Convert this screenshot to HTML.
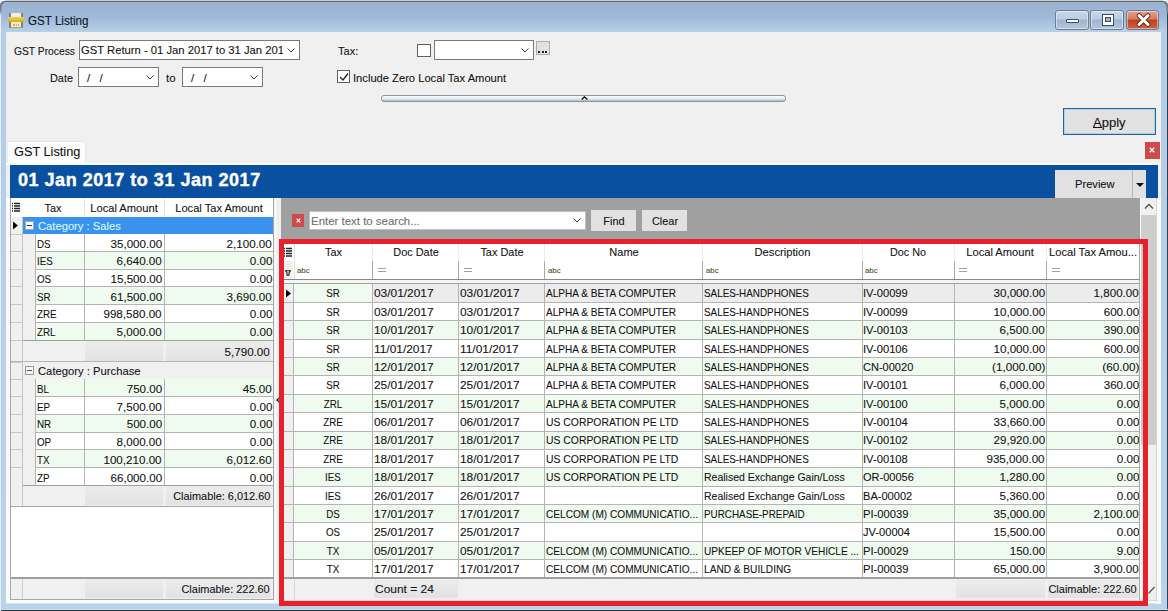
<!DOCTYPE html><html><head><meta charset="utf-8"><style>
html,body{margin:0;padding:0;width:1168px;height:611px;overflow:hidden;background:#f0f0f0;}
body{position:relative;font-family:"Liberation Sans",sans-serif;font-size:11px;}
.t{-webkit-text-stroke:0.1px currentColor;}
div,span{position:absolute;box-sizing:border-box;}
</style></head><body>
<div style="left:0px;top:0px;width:1168px;height:611px;background:linear-gradient(#b4cde6,#b9d3ec);"></div>
<div style="left:0px;top:0px;width:1168px;height:1px;background:#e8ecf0;"></div>
<div style="left:0px;top:3px;width:1168px;height:29px;background:linear-gradient(#9ab3d3 0%,#a1b9d8 50%,#afc8e2 80%,#b8d0e7 100%);"></div>
<div style="left:0px;top:610px;width:1168px;height:1px;background:#2a3440;"></div>
<div style="left:6px;top:32px;width:1155px;height:572px;background:#f0f0f0;"></div>
<div style="left:0px;top:12px;width:1px;height:599px;background:#e4f0fa;"></div>
<div style="left:1167px;top:8px;width:1px;height:603px;background:#33404c;"></div>
<div style="left:6px;top:198px;width:4px;height:406px;background:#fafafa;"></div>
<div style="left:6px;top:600px;width:1155px;height:3px;background:#fafafa;"></div>
<div style="left:6px;top:603px;width:1155px;height:1px;background:#d8e6f2;"></div>
<div style="left:0px;top:609px;width:1168px;height:1px;background:#c8e0f0;"></div>
<svg style="position:absolute;left:0;top:0" width="1168" height="16" viewBox="0 0 1168 16"><path d="M0 0H1168V1H0Z M0 0H6A5 5 0 0 0 0 6Z M1168 0H1162A5 5 0 0 1 1168 6Z" fill="#eef1f4"/><defs><linearGradient id="fd" x1="0" y1="0" x2="0" y2="1"><stop offset="0" stop-color="#5e6670"/><stop offset="0.6" stop-color="#7e8894"/><stop offset="1" stop-color="#7e8894" stop-opacity="0"/></linearGradient></defs><path d="M0.75 16V6.5A5 5 0 0 1 5.75 1.5H1162.25A5 5 0 0 1 1167.25 6.5V16" fill="none" stroke="url(#fd)" stroke-width="1.6"/><path d="M9 2.9H1159" stroke="#a8b3bf" stroke-width="1"/></svg>
<div style="left:8px;top:13px;width:16px;height:15px;"><div style="left:1px;top:0;width:14px;height:5px;background:#f2efdc;border-left:2px solid #7c8478;border-right:2px solid #7c8478;"></div><div style="left:0;top:4px;width:16px;height:5px;background:linear-gradient(#f0d060,#d8a820);border-radius:1px;"></div><div style="left:1px;top:9px;width:14px;height:6px;background:#f6eebc;border-left:2px solid #7c8478;border-right:2px solid #7c8478;border-bottom:1px solid #98a090;"></div><div style="left:5px;top:11px;width:6px;height:2px;border-top:1px dotted #c8b070;border-bottom:1px dotted #c8b070;"></div></div>
<div class="t" style="top:14px;font-size:12px;line-height:14px;color:#101828;white-space:nowrap;left:28px;transform:scaleX(0.968);transform-origin:left 0;">GST Listing</div>
<div style="left:1055px;top:10px;width:34px;height:20px;border:1px solid #6e7e92;border-radius:3px;background:linear-gradient(#c8d8ea 0%,#b9cde3 45%,#9fb6d0 50%,#b0c6de 100%);box-shadow:inset 0 0 0 1px rgba(255,255,255,.45);"><div style="left:10px;top:8px;width:13px;height:4px;background:#fff;border:1px solid #3c4a5a;border-radius:1px;"></div></div>
<div style="left:1090px;top:10px;width:34px;height:20px;border:1px solid #6e7e92;border-radius:3px;background:linear-gradient(#c8d8ea 0%,#b9cde3 45%,#9fb6d0 50%,#b0c6de 100%);box-shadow:inset 0 0 0 1px rgba(255,255,255,.45);"><div style="left:11px;top:3px;width:12px;height:12px;background:#fff;border:1px solid #3c4a5a;"><div style="left:2px;top:2px;width:6px;height:5px;background:#9fb6d0;border:1px solid #3c4a5a;"></div></div></div>
<div style="left:1126px;top:10px;width:33px;height:20px;border:1px solid #6e7e92;border-radius:3px;background:linear-gradient(#e8a090 0%,#d87a60 45%,#c04020 50%,#d06040 100%);box-shadow:inset 0 0 0 1px rgba(255,255,255,.45);"><svg style="position:absolute;left:9px;top:2px" width="15" height="14" viewBox="0 0 15 14"><path d="M3 2.5L12 11.5M12 2.5L3 11.5" stroke="#5a2a20" stroke-width="4.6" stroke-linecap="round"/><path d="M3 2.5L12 11.5M12 2.5L3 11.5" stroke="#fff" stroke-width="3" stroke-linecap="round"/></svg></div>
<div class="t" style="top:45px;font-size:11.5px;line-height:13px;color:#141414;white-space:nowrap;left:14px;transform:scaleX(0.894);transform-origin:left 0;">GST Process</div>
<div style="left:79px;top:40px;width:221px;height:20px;background:#fff;border:1px solid #7a7a7a;"></div>
<svg style="position:absolute;left:287px;top:48px" width="8" height="5" viewBox="0 0 8 5"><path d="M0.5 0.5L4 4L7.5 0.5" fill="none" stroke="#404040" stroke-width="1"/></svg>
<div style="left:81px;top:42px;width:202px;height:16px;overflow:hidden;">
<div class="t" style="top:2px;font-size:11.5px;line-height:13px;color:#141414;white-space:nowrap;left:0px;transform:scaleX(0.978);transform-origin:left 0;">GST Return - 01 Jan 2017 to 31 Jan 2017</div>
</div>
<div class="t" style="top:72px;font-size:11.5px;line-height:13px;color:#141414;white-space:nowrap;left:50px;transform:scaleX(0.946);transform-origin:left 0;">Date</div>
<div style="left:78px;top:67px;width:81px;height:20px;background:#fff;border:1px solid #7a7a7a;"></div>
<svg style="position:absolute;left:146px;top:75px" width="8" height="5" viewBox="0 0 8 5"><path d="M0.5 0.5L4 4L7.5 0.5" fill="none" stroke="#404040" stroke-width="1"/></svg>
<div class="t" style="left:87px;top:72px;font-size:11.5px;color:#141414;letter-spacing:1px">/&nbsp;&nbsp;/</div>
<div class="t" style="top:72px;font-size:11.5px;line-height:13px;color:#141414;white-space:nowrap;left:166px;transform:scaleX(0.995);transform-origin:left 0;">to</div>
<div style="left:182px;top:67px;width:81px;height:20px;background:#fff;border:1px solid #7a7a7a;"></div>
<svg style="position:absolute;left:250px;top:75px" width="8" height="5" viewBox="0 0 8 5"><path d="M0.5 0.5L4 4L7.5 0.5" fill="none" stroke="#404040" stroke-width="1"/></svg>
<div class="t" style="left:191px;top:72px;font-size:11.5px;color:#141414;letter-spacing:1px">/&nbsp;&nbsp;/</div>
<div class="t" style="top:45px;font-size:11.5px;line-height:13px;color:#141414;white-space:nowrap;left:338px;transform:scaleX(0.958);transform-origin:left 0;">Tax:</div>
<div style="left:417px;top:44px;width:14px;height:13px;background:#fff;border:1px solid #606060;"></div>
<div style="left:434px;top:40px;width:100px;height:20px;background:#fff;border:1px solid #7a7a7a;"></div>
<svg style="position:absolute;left:521px;top:48px" width="8" height="5" viewBox="0 0 8 5"><path d="M0.5 0.5L4 4L7.5 0.5" fill="none" stroke="#404040" stroke-width="1"/></svg>
<div style="left:536px;top:41px;width:14px;height:14px;background:#e1e1e1;border:1px solid #adadad;"></div>
<div style="left:538px;top:51px;width:2px;height:2px;background:#222;"></div>
<div style="left:542px;top:51px;width:2px;height:2px;background:#222;"></div>
<div style="left:545px;top:51px;width:2px;height:2px;background:#222;"></div>
<div style="left:337px;top:70px;width:13px;height:13px;background:#fff;border:1px solid #606060;"></div>
<svg style="position:absolute;left:339px;top:72px" width="10" height="10" viewBox="0 0 10 10"><path d="M1 5L4 8L9 1.5" fill="none" stroke="#202020" stroke-width="1.3"/></svg>
<div class="t" style="top:72px;font-size:11.5px;line-height:13px;color:#141414;white-space:nowrap;left:353px;transform:scaleX(0.971);transform-origin:left 0;">Include Zero Local Tax Amount</div>
<div style="left:381px;top:95px;width:405px;height:7px;border:1px solid #8a96a2;border-radius:3px;background:linear-gradient(#fdfefe,#dfe8ef 60%,#aab8c4);"></div>
<svg style="position:absolute;left:581px;top:96px" width="7" height="4" viewBox="0 0 7 4"><path d="M0.7 3.5L3.5 0.8L6.3 3.5" fill="none" stroke="#111" stroke-width="1.3"/></svg>
<div style="left:1063px;top:108px;width:93px;height:27px;border:1px solid #2c628b;background:#e1e1e1;box-shadow:inset 0 0 0 1px #a9d3f5;"></div>
<div class="t" style="top:115px;font-size:13px;line-height:15px;color:#111;white-space:nowrap;left:1093px;">Apply</div>
<div style="left:1093px;top:127px;width:9px;height:1px;background:#111;"></div>
<div style="left:7px;top:141px;width:79px;height:24px;background:#fdfdfd;border:1px solid #e8e8e8;border-bottom:none;"></div>
<div class="t" style="top:145px;font-size:12.5px;line-height:14px;color:#141414;white-space:nowrap;left:14px;transform:scaleX(1.020);transform-origin:left 0;">GST Listing</div>
<div style="left:6px;top:163px;width:1155px;height:2px;background:#fbfbfb;"></div>
<div style="left:1145px;top:142px;width:15px;height:17px;background:#cd4b4b;"></div>
<svg style="position:absolute;left:1149px;top:147px" width="6" height="6" viewBox="0 0 6 6"><path d="M0.8 0.8L5.2 5.2M5.2 0.8L0.8 5.2" stroke="#fff" stroke-width="1.3"/></svg>
<div style="left:10px;top:165px;width:1148px;height:33px;background:#0a50a0;"></div>
<div class="t" style="top:170px;font-size:18px;line-height:21px;color:#fff;white-space:nowrap;font-weight:bold;letter-spacing:0.52px;left:18px;-webkit-text-stroke:0.4px #fff;">01 Jan 2017 to 31 Jan 2017</div>
<div style="left:1055px;top:170px;width:77px;height:28px;background:#e1e1e1;"></div>
<div style="left:1132px;top:170px;width:14px;height:28px;background:#e1e1e1;border-left:1px solid #b8b8b8;"></div>
<div class="t" style="top:178px;font-size:11px;line-height:13px;color:#141414;white-space:nowrap;left:1075px;transform:scaleX(1.012);transform-origin:left 0;">Preview</div>
<svg style="position:absolute;left:1136px;top:183px" width="8" height="4" viewBox="0 0 8 4"><path d="M0 0H8L4 4Z" fill="#111"/></svg>
<div style="left:10px;top:198px;width:264px;height:402px;background:#fff;border:1px solid #a8a8a8;border-top:none;"></div>
<div style="left:11px;top:198px;width:262px;height:19px;background:#fff;"></div>
<div style="left:11px;top:198px;width:11px;height:19px;background:#fff;"></div>
<div style="left:84px;top:199px;width:1px;height:17px;background:#e4e4e4;"></div>
<div style="left:164px;top:199px;width:1px;height:17px;background:#e4e4e4;"></div>
<div style="left:11px;top:217px;width:262px;height:1px;background:#d8d8d8;"></div>
<svg style="position:absolute;left:12px;top:202px" width="8" height="10" viewBox="0 0 8 10"><path d="M0 1.5H1M2 1.5H8M0 4H1M2 4H8M0 6.5H1M2 6.5H8M0 9H1M2 9H8" stroke="#222" stroke-width="1.3"/></svg>
<div class="t" style="top:202px;font-size:11.5px;line-height:13px;color:#141414;white-space:nowrap;left:23px;width:60px;text-align:center;transform:scaleX(0.942);transform-origin:center 0;">Tax</div>
<div class="t" style="top:202px;font-size:11.5px;line-height:13px;color:#141414;white-space:nowrap;left:84px;width:80px;text-align:center;transform:scaleX(0.969);transform-origin:center 0;">Local Amount</div>
<div class="t" style="top:202px;font-size:11.5px;line-height:13px;color:#141414;white-space:nowrap;left:165px;width:108px;text-align:center;transform:scaleX(0.966);transform-origin:center 0;">Local Tax Amount</div>
<div style="left:11px;top:217px;width:11px;height:361px;background:#f0f0f0;"></div>
<div style="left:22px;top:217px;width:251px;height:17px;background:#3892ee;"></div>
<div style="left:25px;top:221px;width:9px;height:9px;background:#fff;border:1px solid #9ab;"><div style="left:1px;top:3px;width:5px;height:1px;background:#333;"></div></div>
<div class="t" style="top:220px;font-size:11.5px;line-height:13px;color:#d8f8ff;white-space:nowrap;left:38px;transform:scaleX(0.974);transform-origin:left 0;">Category : Sales</div>
<svg style="position:absolute;left:13px;top:221px" width="5" height="9" viewBox="0 0 5 9"><path d="M0 0.5L5 4.5L0 8.5Z" fill="#000"/></svg>
<div style="left:36px;top:234px;width:237px;height:17px;background:#fff;"></div>
<div style="left:22px;top:234px;width:14px;height:17px;background:#f0f0f0;"></div>
<div class="t" style="top:238px;font-size:11.5px;line-height:13px;color:#141414;white-space:nowrap;left:37px;transform:scaleX(0.851);transform-origin:left 0;">DS</div>
<div class="t" style="top:238px;font-size:11.5px;line-height:13px;color:#141414;white-space:nowrap;right:1006px;text-align:right;transform:scaleX(1.010);transform-origin:right 0;">35,000.00</div>
<div class="t" style="top:238px;font-size:11.5px;line-height:13px;color:#141414;white-space:nowrap;right:896px;text-align:right;transform:scaleX(1.011);transform-origin:right 0;">2,100.00</div>
<div style="left:36px;top:251px;width:237px;height:18px;background:#effbef;"></div>
<div style="left:22px;top:251px;width:14px;height:18px;background:#f0f0f0;"></div>
<div class="t" style="top:255px;font-size:11.5px;line-height:13px;color:#141414;white-space:nowrap;left:37px;transform:scaleX(0.851);transform-origin:left 0;">IES</div>
<div class="t" style="top:255px;font-size:11.5px;line-height:13px;color:#141414;white-space:nowrap;right:1006px;text-align:right;transform:scaleX(1.011);transform-origin:right 0;">6,640.00</div>
<div class="t" style="top:255px;font-size:11.5px;line-height:13px;color:#141414;white-space:nowrap;right:896px;text-align:right;transform:scaleX(1.011);transform-origin:right 0;">0.00</div>
<div style="left:36px;top:269px;width:237px;height:18px;background:#fff;"></div>
<div style="left:22px;top:269px;width:14px;height:18px;background:#f0f0f0;"></div>
<div class="t" style="top:273px;font-size:11.5px;line-height:13px;color:#141414;white-space:nowrap;left:37px;transform:scaleX(0.851);transform-origin:left 0;">OS</div>
<div class="t" style="top:273px;font-size:11.5px;line-height:13px;color:#141414;white-space:nowrap;right:1006px;text-align:right;transform:scaleX(1.010);transform-origin:right 0;">15,500.00</div>
<div class="t" style="top:273px;font-size:11.5px;line-height:13px;color:#141414;white-space:nowrap;right:896px;text-align:right;transform:scaleX(1.011);transform-origin:right 0;">0.00</div>
<div style="left:36px;top:287px;width:237px;height:17px;background:#effbef;"></div>
<div style="left:22px;top:287px;width:14px;height:17px;background:#f0f0f0;"></div>
<div class="t" style="top:291px;font-size:11.5px;line-height:13px;color:#141414;white-space:nowrap;left:37px;transform:scaleX(0.851);transform-origin:left 0;">SR</div>
<div class="t" style="top:291px;font-size:11.5px;line-height:13px;color:#141414;white-space:nowrap;right:1006px;text-align:right;transform:scaleX(1.010);transform-origin:right 0;">61,500.00</div>
<div class="t" style="top:291px;font-size:11.5px;line-height:13px;color:#141414;white-space:nowrap;right:896px;text-align:right;transform:scaleX(1.011);transform-origin:right 0;">3,690.00</div>
<div style="left:36px;top:304px;width:237px;height:18px;background:#fff;"></div>
<div style="left:22px;top:304px;width:14px;height:18px;background:#f0f0f0;"></div>
<div class="t" style="top:308px;font-size:11.5px;line-height:13px;color:#141414;white-space:nowrap;left:37px;transform:scaleX(0.851);transform-origin:left 0;">ZRE</div>
<div class="t" style="top:308px;font-size:11.5px;line-height:13px;color:#141414;white-space:nowrap;right:1006px;text-align:right;transform:scaleX(1.010);transform-origin:right 0;">998,580.00</div>
<div class="t" style="top:308px;font-size:11.5px;line-height:13px;color:#141414;white-space:nowrap;right:896px;text-align:right;transform:scaleX(1.011);transform-origin:right 0;">0.00</div>
<div style="left:36px;top:322px;width:237px;height:18px;background:#effbef;"></div>
<div style="left:22px;top:322px;width:14px;height:18px;background:#f0f0f0;"></div>
<div class="t" style="top:326px;font-size:11.5px;line-height:13px;color:#141414;white-space:nowrap;left:37px;transform:scaleX(0.851);transform-origin:left 0;">ZRL</div>
<div class="t" style="top:326px;font-size:11.5px;line-height:13px;color:#141414;white-space:nowrap;right:1006px;text-align:right;transform:scaleX(1.011);transform-origin:right 0;">5,000.00</div>
<div class="t" style="top:326px;font-size:11.5px;line-height:13px;color:#141414;white-space:nowrap;right:896px;text-align:right;transform:scaleX(1.011);transform-origin:right 0;">0.00</div>
<div style="left:35px;top:234px;width:1px;height:106px;background:#b4b4b4;"></div>
<div style="left:84px;top:234px;width:1px;height:106px;background:#b4b4b4;"></div>
<div style="left:164px;top:234px;width:1px;height:106px;background:#b4b4b4;"></div>
<div style="left:36px;top:251px;width:237px;height:1px;background:#b4b4b4;"></div>
<div style="left:11px;top:251px;width:11px;height:1px;background:#c8c8c8;"></div>
<div style="left:36px;top:269px;width:237px;height:1px;background:#b4b4b4;"></div>
<div style="left:11px;top:269px;width:11px;height:1px;background:#c8c8c8;"></div>
<div style="left:36px;top:286px;width:237px;height:1px;background:#b4b4b4;"></div>
<div style="left:11px;top:286px;width:11px;height:1px;background:#c8c8c8;"></div>
<div style="left:36px;top:304px;width:237px;height:1px;background:#b4b4b4;"></div>
<div style="left:11px;top:304px;width:11px;height:1px;background:#c8c8c8;"></div>
<div style="left:36px;top:322px;width:237px;height:1px;background:#b4b4b4;"></div>
<div style="left:11px;top:322px;width:11px;height:1px;background:#c8c8c8;"></div>
<div style="left:22px;top:340px;width:251px;height:22px;background:#f0f0f0;"></div>
<div style="left:22px;top:340px;width:251px;height:1px;background:#a0a0a0;"></div>
<div style="left:85px;top:341px;width:78px;height:20px;background:linear-gradient(#ececec,#e2e2e2);"></div>
<div style="left:166px;top:341px;width:105px;height:20px;background:linear-gradient(#ececec,#e2e2e2);"></div>
<div class="t" style="top:346px;font-size:11.5px;line-height:13px;color:#141414;white-space:nowrap;right:898px;text-align:right;transform:scaleX(1.011);transform-origin:right 0;">5,790.00</div>
<div style="left:11px;top:361px;width:262px;height:1px;background:#b4b4b4;"></div>
<div style="left:22px;top:362px;width:251px;height:17px;background:#f0f0f0;"></div>
<div style="left:25px;top:366px;width:9px;height:9px;background:#f8f8f8;border:1px solid #9a9a9a;"><div style="left:1px;top:3px;width:5px;height:1px;background:#555;"></div></div>
<div class="t" style="top:365px;font-size:11.5px;line-height:13px;color:#141414;white-space:nowrap;left:38px;transform:scaleX(0.978);transform-origin:left 0;">Category : Purchase</div>
<div style="left:36px;top:379px;width:237px;height:18px;background:#effbef;"></div>
<div style="left:22px;top:379px;width:14px;height:18px;background:#f0f0f0;"></div>
<div class="t" style="top:383px;font-size:11.5px;line-height:13px;color:#141414;white-space:nowrap;left:37px;transform:scaleX(0.851);transform-origin:left 0;">BL</div>
<div class="t" style="top:383px;font-size:11.5px;line-height:13px;color:#141414;white-space:nowrap;right:1006px;text-align:right;transform:scaleX(1.009);transform-origin:right 0;">750.00</div>
<div class="t" style="top:383px;font-size:11.5px;line-height:13px;color:#141414;white-space:nowrap;right:896px;text-align:right;transform:scaleX(1.010);transform-origin:right 0;">45.00</div>
<div style="left:36px;top:397px;width:237px;height:17px;background:#fff;"></div>
<div style="left:22px;top:397px;width:14px;height:17px;background:#f0f0f0;"></div>
<div class="t" style="top:401px;font-size:11.5px;line-height:13px;color:#141414;white-space:nowrap;left:37px;transform:scaleX(0.851);transform-origin:left 0;">EP</div>
<div class="t" style="top:401px;font-size:11.5px;line-height:13px;color:#141414;white-space:nowrap;right:1006px;text-align:right;transform:scaleX(1.011);transform-origin:right 0;">7,500.00</div>
<div class="t" style="top:401px;font-size:11.5px;line-height:13px;color:#141414;white-space:nowrap;right:896px;text-align:right;transform:scaleX(1.011);transform-origin:right 0;">0.00</div>
<div style="left:36px;top:414px;width:237px;height:18px;background:#effbef;"></div>
<div style="left:22px;top:414px;width:14px;height:18px;background:#f0f0f0;"></div>
<div class="t" style="top:418px;font-size:11.5px;line-height:13px;color:#141414;white-space:nowrap;left:37px;transform:scaleX(0.851);transform-origin:left 0;">NR</div>
<div class="t" style="top:418px;font-size:11.5px;line-height:13px;color:#141414;white-space:nowrap;right:1006px;text-align:right;transform:scaleX(1.009);transform-origin:right 0;">500.00</div>
<div class="t" style="top:418px;font-size:11.5px;line-height:13px;color:#141414;white-space:nowrap;right:896px;text-align:right;transform:scaleX(1.011);transform-origin:right 0;">0.00</div>
<div style="left:36px;top:432px;width:237px;height:18px;background:#fff;"></div>
<div style="left:22px;top:432px;width:14px;height:18px;background:#f0f0f0;"></div>
<div class="t" style="top:436px;font-size:11.5px;line-height:13px;color:#141414;white-space:nowrap;left:37px;transform:scaleX(0.851);transform-origin:left 0;">OP</div>
<div class="t" style="top:436px;font-size:11.5px;line-height:13px;color:#141414;white-space:nowrap;right:1006px;text-align:right;transform:scaleX(1.011);transform-origin:right 0;">8,000.00</div>
<div class="t" style="top:436px;font-size:11.5px;line-height:13px;color:#141414;white-space:nowrap;right:896px;text-align:right;transform:scaleX(1.011);transform-origin:right 0;">0.00</div>
<div style="left:36px;top:450px;width:237px;height:18px;background:#effbef;"></div>
<div style="left:22px;top:450px;width:14px;height:18px;background:#f0f0f0;"></div>
<div class="t" style="top:454px;font-size:11.5px;line-height:13px;color:#141414;white-space:nowrap;left:37px;transform:scaleX(0.851);transform-origin:left 0;">TX</div>
<div class="t" style="top:454px;font-size:11.5px;line-height:13px;color:#141414;white-space:nowrap;right:1006px;text-align:right;transform:scaleX(1.010);transform-origin:right 0;">100,210.00</div>
<div class="t" style="top:454px;font-size:11.5px;line-height:13px;color:#141414;white-space:nowrap;right:896px;text-align:right;transform:scaleX(1.011);transform-origin:right 0;">6,012.60</div>
<div style="left:36px;top:468px;width:237px;height:17px;background:#fff;"></div>
<div style="left:22px;top:468px;width:14px;height:17px;background:#f0f0f0;"></div>
<div class="t" style="top:472px;font-size:11.5px;line-height:13px;color:#141414;white-space:nowrap;left:37px;transform:scaleX(0.851);transform-origin:left 0;">ZP</div>
<div class="t" style="top:472px;font-size:11.5px;line-height:13px;color:#141414;white-space:nowrap;right:1006px;text-align:right;transform:scaleX(1.010);transform-origin:right 0;">66,000.00</div>
<div class="t" style="top:472px;font-size:11.5px;line-height:13px;color:#141414;white-space:nowrap;right:896px;text-align:right;transform:scaleX(1.011);transform-origin:right 0;">0.00</div>
<div style="left:35px;top:379px;width:1px;height:106px;background:#b4b4b4;"></div>
<div style="left:84px;top:379px;width:1px;height:106px;background:#b4b4b4;"></div>
<div style="left:164px;top:379px;width:1px;height:106px;background:#b4b4b4;"></div>
<div style="left:36px;top:396px;width:237px;height:1px;background:#b4b4b4;"></div>
<div style="left:11px;top:396px;width:11px;height:1px;background:#c8c8c8;"></div>
<div style="left:36px;top:414px;width:237px;height:1px;background:#b4b4b4;"></div>
<div style="left:11px;top:414px;width:11px;height:1px;background:#c8c8c8;"></div>
<div style="left:36px;top:432px;width:237px;height:1px;background:#b4b4b4;"></div>
<div style="left:11px;top:432px;width:11px;height:1px;background:#c8c8c8;"></div>
<div style="left:36px;top:449px;width:237px;height:1px;background:#b4b4b4;"></div>
<div style="left:11px;top:449px;width:11px;height:1px;background:#c8c8c8;"></div>
<div style="left:36px;top:467px;width:237px;height:1px;background:#b4b4b4;"></div>
<div style="left:11px;top:467px;width:11px;height:1px;background:#c8c8c8;"></div>
<div style="left:22px;top:485px;width:251px;height:1px;background:#a0a0a0;"></div>
<div style="left:22px;top:486px;width:251px;height:20px;background:#f0f0f0;"></div>
<div style="left:85px;top:486px;width:78px;height:19px;background:linear-gradient(#ececec,#e2e2e2);"></div>
<div style="left:166px;top:486px;width:105px;height:19px;background:linear-gradient(#ececec,#e2e2e2);"></div>
<div class="t" style="top:490px;font-size:11.5px;line-height:13px;color:#141414;white-space:nowrap;right:898px;text-align:right;transform:scaleX(0.949);transform-origin:right 0;">Claimable: 6,012.60</div>
<div style="left:22px;top:340px;width:1px;height:166px;background:#b4b4b4;"></div>
<div style="left:11px;top:234px;width:11px;height:1px;background:#c8c8c8;"></div>
<div style="left:11px;top:340px;width:11px;height:1px;background:#c8c8c8;"></div>
<div style="left:11px;top:362px;width:11px;height:1px;background:#c8c8c8;"></div>
<div style="left:11px;top:379px;width:11px;height:1px;background:#c8c8c8;"></div>
<div style="left:11px;top:506px;width:11px;height:72px;background:#fff;"></div>
<div style="left:11px;top:506px;width:262px;height:72px;background:#fff;"></div>
<div style="left:11px;top:506px;width:262px;height:1px;background:#a8a8a8;"></div>
<div style="left:22px;top:217px;width:1px;height:289px;background:#c4c4c4;"></div>
<div style="left:11px;top:577px;width:262px;height:2px;background:#a0a0a0;"></div>
<div style="left:11px;top:579px;width:262px;height:20px;background:#f0f0f0;"></div>
<div style="left:22px;top:579px;width:1px;height:20px;background:#d0d0d0;"></div>
<div style="left:85px;top:579px;width:78px;height:19px;background:linear-gradient(#ececec,#e2e2e2);"></div>
<div style="left:166px;top:579px;width:105px;height:19px;background:linear-gradient(#ececec,#e2e2e2);"></div>
<div class="t" style="top:583px;font-size:11.5px;line-height:13px;color:#141414;white-space:nowrap;right:898px;text-align:right;transform:scaleX(0.952);transform-origin:right 0;">Claimable: 222.60</div>
<div style="left:274px;top:198px;width:7px;height:402px;background:#f0f0f0;"></div>
<div style="left:275px;top:198px;width:1px;height:402px;background:#ffffff;"></div>
<svg style="position:absolute;left:276px;top:397px" width="4" height="6" viewBox="0 0 4 6"><path d="M3.5 0L0 3L3.5 6V4.6L1.8 3L3.5 1.4Z" fill="#111"/></svg>
<div style="left:281px;top:198px;width:859px;height:41px;background:#a0a0a0;"></div>
<div style="left:281px;top:239px;width:859px;height:361px;background:#a0a0a0;"></div>
<div style="left:292px;top:214px;width:12px;height:13px;background:#cd4b4b;"></div>
<svg style="position:absolute;left:296px;top:218px" width="5" height="5" viewBox="0 0 5 5"><path d="M0.7 0.7L4.3 4.3M4.3 0.7L0.7 4.3" stroke="#fff" stroke-width="1.2"/></svg>
<div style="left:309px;top:211px;width:277px;height:19px;background:#fff;border:1px solid #7a7a7a;"></div>
<svg style="position:absolute;left:573px;top:218px" width="8" height="5" viewBox="0 0 8 5"><path d="M0.5 0.5L4 4L7.5 0.5" fill="none" stroke="#404040" stroke-width="1"/></svg>
<div style="left:309px;top:211px;width:277px;height:19px;border:1px solid #c0c0c0;background:transparent;"></div>
<div class="t" style="top:215px;font-size:11.5px;line-height:13px;color:#6d6d6d;white-space:nowrap;left:311px;transform:scaleX(0.995);transform-origin:left 0;">Enter text to search...</div>
<div style="left:591px;top:210px;width:45px;height:21px;background:#e1e1e1;"></div>
<div class="t" style="top:215px;font-size:11.5px;line-height:13px;color:#141414;white-space:nowrap;left:592px;width:44px;text-align:center;transform:scaleX(0.950);transform-origin:center 0;">Find</div>
<div style="left:642px;top:210px;width:45px;height:21px;background:#e1e1e1;"></div>
<div class="t" style="top:215px;font-size:11.5px;line-height:13px;color:#141414;white-space:nowrap;left:643px;width:44px;text-align:center;transform:scaleX(0.951);transform-origin:center 0;">Clear</div>
<div style="left:1140px;top:198px;width:17px;height:402px;background:#f0f0f0;border-left:1px solid #e8e8e8;"></div>
<svg style="position:absolute;left:1144px;top:203px" width="10" height="6" viewBox="0 0 10 6"><path d="M1 5.5L5 1.5L9 5.5" fill="none" stroke="#505050" stroke-width="1.3"/></svg>
<div style="left:1141px;top:216px;width:15px;height:229px;background:#cdcdcd;"></div>
<div style="left:1157px;top:198px;width:4px;height:406px;background:#f4f4f4;"></div>
<svg style="position:absolute;left:1148px;top:586px" width="7" height="8" viewBox="0 0 7 8"><path d="M0.5 7.5L6.5 1" stroke="#555" stroke-width="1.2"/></svg>
<div style="left:284px;top:244px;width:856px;height:356px;background:#fff;"></div>
<div style="left:284px;top:244px;width:9px;height:17px;background:#ffffff;"></div>
<div style="left:284px;top:261px;width:9px;height:18px;background:#f0f0f0;"></div>
<svg style="position:absolute;left:284px;top:247px" width="8" height="10" viewBox="0 0 8 10"><path d="M0 1.5H1M2 1.5H8M0 4H1M2 4H8M0 6.5H1M2 6.5H8M0 9H1M2 9H8" stroke="#222" stroke-width="1.3"/></svg>
<svg style="position:absolute;left:285px;top:270px" width="6" height="6" viewBox="0 0 6 6"><path d="M0.5 0.8H5.5L4 2.6V5.3H2V2.6Z" fill="none" stroke="#222" stroke-width="1.1"/></svg>
<div class="t" style="top:246px;font-size:11.5px;line-height:13px;color:#141414;white-space:nowrap;left:294px;width:79px;text-align:center;transform:scaleX(0.942);transform-origin:center 0;">Tax</div>
<div class="t" style="top:266px;font-size:7.5px;line-height:9px;color:#3e5a26;white-space:nowrap;left:297px;transform:scaleX(1.040);transform-origin:left 0;">abc</div>
<div style="left:372px;top:244px;width:1px;height:17px;background:#ececec;"></div>
<div style="left:372px;top:261px;width:1px;height:18px;background:#a8a8a8;"></div>
<div class="t" style="top:246px;font-size:11.5px;line-height:13px;color:#141414;white-space:nowrap;left:373px;width:86px;text-align:center;transform:scaleX(0.949);transform-origin:center 0;">Doc Date</div>
<div style="left:378px;top:268px;width:8px;height:1px;background:#a0a0a0;"></div>
<div style="left:378px;top:271px;width:8px;height:1px;background:#a0a0a0;"></div>
<div style="left:458px;top:244px;width:1px;height:17px;background:#ececec;"></div>
<div style="left:458px;top:261px;width:1px;height:18px;background:#a8a8a8;"></div>
<div class="t" style="top:246px;font-size:11.5px;line-height:13px;color:#141414;white-space:nowrap;left:459px;width:86px;text-align:center;transform:scaleX(0.952);transform-origin:center 0;">Tax Date</div>
<div style="left:464px;top:268px;width:8px;height:1px;background:#a0a0a0;"></div>
<div style="left:464px;top:271px;width:8px;height:1px;background:#a0a0a0;"></div>
<div style="left:544px;top:244px;width:1px;height:17px;background:#ececec;"></div>
<div style="left:544px;top:261px;width:1px;height:18px;background:#a8a8a8;"></div>
<div class="t" style="top:246px;font-size:11.5px;line-height:13px;color:#141414;white-space:nowrap;left:545px;width:158px;text-align:center;transform:scaleX(0.956);transform-origin:center 0;">Name</div>
<div class="t" style="top:266px;font-size:7.5px;line-height:9px;color:#3e5a26;white-space:nowrap;left:548px;transform:scaleX(1.040);transform-origin:left 0;">abc</div>
<div style="left:702px;top:244px;width:1px;height:17px;background:#ececec;"></div>
<div style="left:702px;top:261px;width:1px;height:18px;background:#a8a8a8;"></div>
<div class="t" style="top:246px;font-size:11.5px;line-height:13px;color:#141414;white-space:nowrap;left:703px;width:159px;text-align:center;transform:scaleX(0.974);transform-origin:center 0;">Description</div>
<div class="t" style="top:266px;font-size:7.5px;line-height:9px;color:#3e5a26;white-space:nowrap;left:706px;transform:scaleX(1.040);transform-origin:left 0;">abc</div>
<div style="left:862px;top:244px;width:1px;height:17px;background:#ececec;"></div>
<div style="left:862px;top:261px;width:1px;height:18px;background:#a8a8a8;"></div>
<div class="t" style="top:246px;font-size:11.5px;line-height:13px;color:#141414;white-space:nowrap;left:862px;width:92px;text-align:center;transform:scaleX(0.937);transform-origin:center 0;">Doc No</div>
<div class="t" style="top:266px;font-size:7.5px;line-height:9px;color:#3e5a26;white-space:nowrap;left:865px;transform:scaleX(1.040);transform-origin:left 0;">abc</div>
<div style="left:954px;top:244px;width:1px;height:17px;background:#ececec;"></div>
<div style="left:954px;top:261px;width:1px;height:18px;background:#a8a8a8;"></div>
<div class="t" style="top:246px;font-size:11.5px;line-height:13px;color:#141414;white-space:nowrap;left:954px;width:92px;text-align:center;transform:scaleX(0.969);transform-origin:center 0;">Local Amount</div>
<div style="left:959px;top:268px;width:8px;height:1px;background:#a0a0a0;"></div>
<div style="left:959px;top:271px;width:8px;height:1px;background:#a0a0a0;"></div>
<div style="left:1046px;top:244px;width:1px;height:17px;background:#ececec;"></div>
<div style="left:1046px;top:261px;width:1px;height:18px;background:#a8a8a8;"></div>
<div class="t" style="top:246px;font-size:11.5px;line-height:13px;color:#141414;white-space:nowrap;left:1047px;width:92px;text-align:center;transform:scaleX(0.972);transform-origin:center 0;">Local Tax Amou...</div>
<div style="left:1052px;top:268px;width:8px;height:1px;background:#a0a0a0;"></div>
<div style="left:1052px;top:271px;width:8px;height:1px;background:#a0a0a0;"></div>
<div style="left:294px;top:244px;width:1px;height:35px;background:#e0e0e0;"></div>
<div style="left:284px;top:279px;width:856px;height:1px;background:#888;"></div>
<div style="left:284px;top:280px;width:856px;height:3px;background:#f4f4f4;"></div>
<div style="left:284px;top:283px;width:856px;height:1px;background:#a0a0a0;"></div>
<div style="left:294px;top:284px;width:846px;height:18px;background:#effbef;"></div>
<div style="left:373px;top:284px;width:767px;height:18px;background:#ececec;"></div>
<div style="left:284px;top:284px;width:10px;height:18px;background:#f0f0f0;"></div>
<div class="t" style="top:287px;font-size:11.5px;line-height:13px;color:#141414;white-space:nowrap;left:294px;width:78px;text-align:center;transform:scaleX(0.851);transform-origin:center 0;">SR</div>
<div class="t" style="top:287px;font-size:11.5px;line-height:13px;color:#141414;white-space:nowrap;left:374px;transform:scaleX(1.035);transform-origin:left 0;">03/01/2017</div>
<div class="t" style="top:287px;font-size:11.5px;line-height:13px;color:#141414;white-space:nowrap;left:460px;transform:scaleX(1.035);transform-origin:left 0;">03/01/2017</div>
<div class="t" style="top:287px;font-size:11.5px;line-height:13px;color:#141414;white-space:nowrap;left:546px;transform:scaleX(0.874);transform-origin:left 0;">ALPHA &amp; BETA COMPUTER</div>
<div class="t" style="top:287px;font-size:11.5px;line-height:13px;color:#141414;white-space:nowrap;left:704px;transform:scaleX(0.858);transform-origin:left 0;">SALES-HANDPHONES</div>
<div class="t" style="top:287px;font-size:11.5px;line-height:13px;color:#141414;white-space:nowrap;left:863px;transform:scaleX(0.973);transform-origin:left 0;">IV-00099</div>
<div class="t" style="top:287px;font-size:11.5px;line-height:13px;color:#141414;white-space:nowrap;right:123px;text-align:right;transform:scaleX(1.010);transform-origin:right 0;">30,000.00</div>
<div class="t" style="top:287px;font-size:11.5px;line-height:13px;color:#141414;white-space:nowrap;right:29px;text-align:right;transform:scaleX(1.011);transform-origin:right 0;">1,800.00</div>
<div style="left:294px;top:302px;width:846px;height:19px;background:#fff;"></div>
<div style="left:284px;top:302px;width:10px;height:19px;background:#f0f0f0;"></div>
<div class="t" style="top:306px;font-size:11.5px;line-height:13px;color:#141414;white-space:nowrap;left:294px;width:78px;text-align:center;transform:scaleX(0.851);transform-origin:center 0;">SR</div>
<div class="t" style="top:306px;font-size:11.5px;line-height:13px;color:#141414;white-space:nowrap;left:374px;transform:scaleX(1.035);transform-origin:left 0;">03/01/2017</div>
<div class="t" style="top:306px;font-size:11.5px;line-height:13px;color:#141414;white-space:nowrap;left:460px;transform:scaleX(1.035);transform-origin:left 0;">03/01/2017</div>
<div class="t" style="top:306px;font-size:11.5px;line-height:13px;color:#141414;white-space:nowrap;left:546px;transform:scaleX(0.874);transform-origin:left 0;">ALPHA &amp; BETA COMPUTER</div>
<div class="t" style="top:306px;font-size:11.5px;line-height:13px;color:#141414;white-space:nowrap;left:704px;transform:scaleX(0.858);transform-origin:left 0;">SALES-HANDPHONES</div>
<div class="t" style="top:306px;font-size:11.5px;line-height:13px;color:#141414;white-space:nowrap;left:863px;transform:scaleX(0.973);transform-origin:left 0;">IV-00099</div>
<div class="t" style="top:306px;font-size:11.5px;line-height:13px;color:#141414;white-space:nowrap;right:123px;text-align:right;transform:scaleX(1.010);transform-origin:right 0;">10,000.00</div>
<div class="t" style="top:306px;font-size:11.5px;line-height:13px;color:#141414;white-space:nowrap;right:29px;text-align:right;transform:scaleX(1.009);transform-origin:right 0;">600.00</div>
<div style="left:284px;top:302px;width:856px;height:1px;background:#b4b4b4;"></div>
<div style="left:294px;top:321px;width:846px;height:18px;background:#effbef;"></div>
<div style="left:284px;top:321px;width:10px;height:18px;background:#f0f0f0;"></div>
<div class="t" style="top:324px;font-size:11.5px;line-height:13px;color:#141414;white-space:nowrap;left:294px;width:78px;text-align:center;transform:scaleX(0.851);transform-origin:center 0;">SR</div>
<div class="t" style="top:324px;font-size:11.5px;line-height:13px;color:#141414;white-space:nowrap;left:374px;transform:scaleX(1.035);transform-origin:left 0;">10/01/2017</div>
<div class="t" style="top:324px;font-size:11.5px;line-height:13px;color:#141414;white-space:nowrap;left:460px;transform:scaleX(1.035);transform-origin:left 0;">10/01/2017</div>
<div class="t" style="top:324px;font-size:11.5px;line-height:13px;color:#141414;white-space:nowrap;left:546px;transform:scaleX(0.874);transform-origin:left 0;">ALPHA &amp; BETA COMPUTER</div>
<div class="t" style="top:324px;font-size:11.5px;line-height:13px;color:#141414;white-space:nowrap;left:704px;transform:scaleX(0.858);transform-origin:left 0;">SALES-HANDPHONES</div>
<div class="t" style="top:324px;font-size:11.5px;line-height:13px;color:#141414;white-space:nowrap;left:863px;transform:scaleX(0.973);transform-origin:left 0;">IV-00103</div>
<div class="t" style="top:324px;font-size:11.5px;line-height:13px;color:#141414;white-space:nowrap;right:123px;text-align:right;transform:scaleX(1.011);transform-origin:right 0;">6,500.00</div>
<div class="t" style="top:324px;font-size:11.5px;line-height:13px;color:#141414;white-space:nowrap;right:29px;text-align:right;transform:scaleX(1.009);transform-origin:right 0;">390.00</div>
<div style="left:284px;top:320px;width:856px;height:1px;background:#b4b4b4;"></div>
<div style="left:294px;top:339px;width:846px;height:19px;background:#fff;"></div>
<div style="left:284px;top:339px;width:10px;height:19px;background:#f0f0f0;"></div>
<div class="t" style="top:343px;font-size:11.5px;line-height:13px;color:#141414;white-space:nowrap;left:294px;width:78px;text-align:center;transform:scaleX(0.851);transform-origin:center 0;">SR</div>
<div class="t" style="top:343px;font-size:11.5px;line-height:13px;color:#141414;white-space:nowrap;left:374px;transform:scaleX(1.035);transform-origin:left 0;">11/01/2017</div>
<div class="t" style="top:343px;font-size:11.5px;line-height:13px;color:#141414;white-space:nowrap;left:460px;transform:scaleX(1.035);transform-origin:left 0;">11/01/2017</div>
<div class="t" style="top:343px;font-size:11.5px;line-height:13px;color:#141414;white-space:nowrap;left:546px;transform:scaleX(0.874);transform-origin:left 0;">ALPHA &amp; BETA COMPUTER</div>
<div class="t" style="top:343px;font-size:11.5px;line-height:13px;color:#141414;white-space:nowrap;left:704px;transform:scaleX(0.858);transform-origin:left 0;">SALES-HANDPHONES</div>
<div class="t" style="top:343px;font-size:11.5px;line-height:13px;color:#141414;white-space:nowrap;left:863px;transform:scaleX(0.973);transform-origin:left 0;">IV-00106</div>
<div class="t" style="top:343px;font-size:11.5px;line-height:13px;color:#141414;white-space:nowrap;right:123px;text-align:right;transform:scaleX(1.010);transform-origin:right 0;">10,000.00</div>
<div class="t" style="top:343px;font-size:11.5px;line-height:13px;color:#141414;white-space:nowrap;right:29px;text-align:right;transform:scaleX(1.009);transform-origin:right 0;">600.00</div>
<div style="left:284px;top:339px;width:856px;height:1px;background:#b4b4b4;"></div>
<div style="left:294px;top:358px;width:846px;height:18px;background:#effbef;"></div>
<div style="left:284px;top:358px;width:10px;height:18px;background:#f0f0f0;"></div>
<div class="t" style="top:361px;font-size:11.5px;line-height:13px;color:#141414;white-space:nowrap;left:294px;width:78px;text-align:center;transform:scaleX(0.851);transform-origin:center 0;">SR</div>
<div class="t" style="top:361px;font-size:11.5px;line-height:13px;color:#141414;white-space:nowrap;left:374px;transform:scaleX(1.035);transform-origin:left 0;">12/01/2017</div>
<div class="t" style="top:361px;font-size:11.5px;line-height:13px;color:#141414;white-space:nowrap;left:460px;transform:scaleX(1.035);transform-origin:left 0;">12/01/2017</div>
<div class="t" style="top:361px;font-size:11.5px;line-height:13px;color:#141414;white-space:nowrap;left:546px;transform:scaleX(0.874);transform-origin:left 0;">ALPHA &amp; BETA COMPUTER</div>
<div class="t" style="top:361px;font-size:11.5px;line-height:13px;color:#141414;white-space:nowrap;left:704px;transform:scaleX(0.858);transform-origin:left 0;">SALES-HANDPHONES</div>
<div class="t" style="top:361px;font-size:11.5px;line-height:13px;color:#141414;white-space:nowrap;left:863px;transform:scaleX(0.959);transform-origin:left 0;">CN-00020</div>
<div class="t" style="top:361px;font-size:11.5px;line-height:13px;color:#141414;white-space:nowrap;right:123px;text-align:right;transform:scaleX(1.017);transform-origin:right 0;">(1,000.00)</div>
<div class="t" style="top:361px;font-size:11.5px;line-height:13px;color:#141414;white-space:nowrap;right:29px;text-align:right;transform:scaleX(1.019);transform-origin:right 0;">(60.00)</div>
<div style="left:284px;top:357px;width:856px;height:1px;background:#b4b4b4;"></div>
<div style="left:294px;top:376px;width:846px;height:18px;background:#fff;"></div>
<div style="left:284px;top:376px;width:10px;height:18px;background:#f0f0f0;"></div>
<div class="t" style="top:379px;font-size:11.5px;line-height:13px;color:#141414;white-space:nowrap;left:294px;width:78px;text-align:center;transform:scaleX(0.851);transform-origin:center 0;">SR</div>
<div class="t" style="top:379px;font-size:11.5px;line-height:13px;color:#141414;white-space:nowrap;left:374px;transform:scaleX(1.035);transform-origin:left 0;">25/01/2017</div>
<div class="t" style="top:379px;font-size:11.5px;line-height:13px;color:#141414;white-space:nowrap;left:460px;transform:scaleX(1.035);transform-origin:left 0;">25/01/2017</div>
<div class="t" style="top:379px;font-size:11.5px;line-height:13px;color:#141414;white-space:nowrap;left:546px;transform:scaleX(0.874);transform-origin:left 0;">ALPHA &amp; BETA COMPUTER</div>
<div class="t" style="top:379px;font-size:11.5px;line-height:13px;color:#141414;white-space:nowrap;left:704px;transform:scaleX(0.858);transform-origin:left 0;">SALES-HANDPHONES</div>
<div class="t" style="top:379px;font-size:11.5px;line-height:13px;color:#141414;white-space:nowrap;left:863px;transform:scaleX(0.973);transform-origin:left 0;">IV-00101</div>
<div class="t" style="top:379px;font-size:11.5px;line-height:13px;color:#141414;white-space:nowrap;right:123px;text-align:right;transform:scaleX(1.011);transform-origin:right 0;">6,000.00</div>
<div class="t" style="top:379px;font-size:11.5px;line-height:13px;color:#141414;white-space:nowrap;right:29px;text-align:right;transform:scaleX(1.009);transform-origin:right 0;">360.00</div>
<div style="left:284px;top:375px;width:856px;height:1px;background:#b4b4b4;"></div>
<div style="left:294px;top:394px;width:846px;height:19px;background:#effbef;"></div>
<div style="left:284px;top:394px;width:10px;height:19px;background:#f0f0f0;"></div>
<div class="t" style="top:398px;font-size:11.5px;line-height:13px;color:#141414;white-space:nowrap;left:294px;width:78px;text-align:center;transform:scaleX(0.851);transform-origin:center 0;">ZRL</div>
<div class="t" style="top:398px;font-size:11.5px;line-height:13px;color:#141414;white-space:nowrap;left:374px;transform:scaleX(1.035);transform-origin:left 0;">15/01/2017</div>
<div class="t" style="top:398px;font-size:11.5px;line-height:13px;color:#141414;white-space:nowrap;left:460px;transform:scaleX(1.035);transform-origin:left 0;">15/01/2017</div>
<div class="t" style="top:398px;font-size:11.5px;line-height:13px;color:#141414;white-space:nowrap;left:546px;transform:scaleX(0.874);transform-origin:left 0;">ALPHA &amp; BETA COMPUTER</div>
<div class="t" style="top:398px;font-size:11.5px;line-height:13px;color:#141414;white-space:nowrap;left:704px;transform:scaleX(0.858);transform-origin:left 0;">SALES-HANDPHONES</div>
<div class="t" style="top:398px;font-size:11.5px;line-height:13px;color:#141414;white-space:nowrap;left:863px;transform:scaleX(0.973);transform-origin:left 0;">IV-00100</div>
<div class="t" style="top:398px;font-size:11.5px;line-height:13px;color:#141414;white-space:nowrap;right:123px;text-align:right;transform:scaleX(1.011);transform-origin:right 0;">5,000.00</div>
<div class="t" style="top:398px;font-size:11.5px;line-height:13px;color:#141414;white-space:nowrap;right:29px;text-align:right;transform:scaleX(1.011);transform-origin:right 0;">0.00</div>
<div style="left:284px;top:394px;width:856px;height:1px;background:#b4b4b4;"></div>
<div style="left:294px;top:413px;width:846px;height:18px;background:#fff;"></div>
<div style="left:284px;top:413px;width:10px;height:18px;background:#f0f0f0;"></div>
<div class="t" style="top:416px;font-size:11.5px;line-height:13px;color:#141414;white-space:nowrap;left:294px;width:78px;text-align:center;transform:scaleX(0.851);transform-origin:center 0;">ZRE</div>
<div class="t" style="top:416px;font-size:11.5px;line-height:13px;color:#141414;white-space:nowrap;left:374px;transform:scaleX(1.035);transform-origin:left 0;">06/01/2017</div>
<div class="t" style="top:416px;font-size:11.5px;line-height:13px;color:#141414;white-space:nowrap;left:460px;transform:scaleX(1.035);transform-origin:left 0;">06/01/2017</div>
<div class="t" style="top:416px;font-size:11.5px;line-height:13px;color:#141414;white-space:nowrap;left:546px;transform:scaleX(0.903);transform-origin:left 0;">US CORPORATION PE LTD</div>
<div class="t" style="top:416px;font-size:11.5px;line-height:13px;color:#141414;white-space:nowrap;left:704px;transform:scaleX(0.858);transform-origin:left 0;">SALES-HANDPHONES</div>
<div class="t" style="top:416px;font-size:11.5px;line-height:13px;color:#141414;white-space:nowrap;left:863px;transform:scaleX(0.973);transform-origin:left 0;">IV-00104</div>
<div class="t" style="top:416px;font-size:11.5px;line-height:13px;color:#141414;white-space:nowrap;right:123px;text-align:right;transform:scaleX(1.010);transform-origin:right 0;">33,660.00</div>
<div class="t" style="top:416px;font-size:11.5px;line-height:13px;color:#141414;white-space:nowrap;right:29px;text-align:right;transform:scaleX(1.011);transform-origin:right 0;">0.00</div>
<div style="left:284px;top:412px;width:856px;height:1px;background:#b4b4b4;"></div>
<div style="left:294px;top:431px;width:846px;height:18px;background:#effbef;"></div>
<div style="left:284px;top:431px;width:10px;height:18px;background:#f0f0f0;"></div>
<div class="t" style="top:434px;font-size:11.5px;line-height:13px;color:#141414;white-space:nowrap;left:294px;width:78px;text-align:center;transform:scaleX(0.851);transform-origin:center 0;">ZRE</div>
<div class="t" style="top:434px;font-size:11.5px;line-height:13px;color:#141414;white-space:nowrap;left:374px;transform:scaleX(1.035);transform-origin:left 0;">18/01/2017</div>
<div class="t" style="top:434px;font-size:11.5px;line-height:13px;color:#141414;white-space:nowrap;left:460px;transform:scaleX(1.035);transform-origin:left 0;">18/01/2017</div>
<div class="t" style="top:434px;font-size:11.5px;line-height:13px;color:#141414;white-space:nowrap;left:546px;transform:scaleX(0.903);transform-origin:left 0;">US CORPORATION PE LTD</div>
<div class="t" style="top:434px;font-size:11.5px;line-height:13px;color:#141414;white-space:nowrap;left:704px;transform:scaleX(0.858);transform-origin:left 0;">SALES-HANDPHONES</div>
<div class="t" style="top:434px;font-size:11.5px;line-height:13px;color:#141414;white-space:nowrap;left:863px;transform:scaleX(0.973);transform-origin:left 0;">IV-00102</div>
<div class="t" style="top:434px;font-size:11.5px;line-height:13px;color:#141414;white-space:nowrap;right:123px;text-align:right;transform:scaleX(1.010);transform-origin:right 0;">29,920.00</div>
<div class="t" style="top:434px;font-size:11.5px;line-height:13px;color:#141414;white-space:nowrap;right:29px;text-align:right;transform:scaleX(1.011);transform-origin:right 0;">0.00</div>
<div style="left:284px;top:431px;width:856px;height:1px;background:#b4b4b4;"></div>
<div style="left:294px;top:449px;width:846px;height:19px;background:#fff;"></div>
<div style="left:284px;top:449px;width:10px;height:19px;background:#f0f0f0;"></div>
<div class="t" style="top:453px;font-size:11.5px;line-height:13px;color:#141414;white-space:nowrap;left:294px;width:78px;text-align:center;transform:scaleX(0.851);transform-origin:center 0;">ZRE</div>
<div class="t" style="top:453px;font-size:11.5px;line-height:13px;color:#141414;white-space:nowrap;left:374px;transform:scaleX(1.035);transform-origin:left 0;">18/01/2017</div>
<div class="t" style="top:453px;font-size:11.5px;line-height:13px;color:#141414;white-space:nowrap;left:460px;transform:scaleX(1.035);transform-origin:left 0;">18/01/2017</div>
<div class="t" style="top:453px;font-size:11.5px;line-height:13px;color:#141414;white-space:nowrap;left:546px;transform:scaleX(0.903);transform-origin:left 0;">US CORPORATION PE LTD</div>
<div class="t" style="top:453px;font-size:11.5px;line-height:13px;color:#141414;white-space:nowrap;left:704px;transform:scaleX(0.858);transform-origin:left 0;">SALES-HANDPHONES</div>
<div class="t" style="top:453px;font-size:11.5px;line-height:13px;color:#141414;white-space:nowrap;left:863px;transform:scaleX(0.973);transform-origin:left 0;">IV-00108</div>
<div class="t" style="top:453px;font-size:11.5px;line-height:13px;color:#141414;white-space:nowrap;right:123px;text-align:right;transform:scaleX(1.010);transform-origin:right 0;">935,000.00</div>
<div class="t" style="top:453px;font-size:11.5px;line-height:13px;color:#141414;white-space:nowrap;right:29px;text-align:right;transform:scaleX(1.011);transform-origin:right 0;">0.00</div>
<div style="left:284px;top:449px;width:856px;height:1px;background:#b4b4b4;"></div>
<div style="left:294px;top:468px;width:846px;height:18px;background:#effbef;"></div>
<div style="left:284px;top:468px;width:10px;height:18px;background:#f0f0f0;"></div>
<div class="t" style="top:471px;font-size:11.5px;line-height:13px;color:#141414;white-space:nowrap;left:294px;width:78px;text-align:center;transform:scaleX(0.851);transform-origin:center 0;">IES</div>
<div class="t" style="top:471px;font-size:11.5px;line-height:13px;color:#141414;white-space:nowrap;left:374px;transform:scaleX(1.035);transform-origin:left 0;">18/01/2017</div>
<div class="t" style="top:471px;font-size:11.5px;line-height:13px;color:#141414;white-space:nowrap;left:460px;transform:scaleX(1.035);transform-origin:left 0;">18/01/2017</div>
<div class="t" style="top:471px;font-size:11.5px;line-height:13px;color:#141414;white-space:nowrap;left:546px;transform:scaleX(0.903);transform-origin:left 0;">US CORPORATION PE LTD</div>
<div class="t" style="top:471px;font-size:11.5px;line-height:13px;color:#141414;white-space:nowrap;left:704px;transform:scaleX(0.913);transform-origin:left 0;">Realised Exchange Gain/Loss</div>
<div class="t" style="top:471px;font-size:11.5px;line-height:13px;color:#141414;white-space:nowrap;left:863px;transform:scaleX(0.958);transform-origin:left 0;">OR-00056</div>
<div class="t" style="top:471px;font-size:11.5px;line-height:13px;color:#141414;white-space:nowrap;right:123px;text-align:right;transform:scaleX(1.011);transform-origin:right 0;">1,280.00</div>
<div class="t" style="top:471px;font-size:11.5px;line-height:13px;color:#141414;white-space:nowrap;right:29px;text-align:right;transform:scaleX(1.011);transform-origin:right 0;">0.00</div>
<div style="left:284px;top:467px;width:856px;height:1px;background:#b4b4b4;"></div>
<div style="left:294px;top:486px;width:846px;height:19px;background:#fff;"></div>
<div style="left:284px;top:486px;width:10px;height:19px;background:#f0f0f0;"></div>
<div class="t" style="top:490px;font-size:11.5px;line-height:13px;color:#141414;white-space:nowrap;left:294px;width:78px;text-align:center;transform:scaleX(0.851);transform-origin:center 0;">IES</div>
<div class="t" style="top:490px;font-size:11.5px;line-height:13px;color:#141414;white-space:nowrap;left:374px;transform:scaleX(1.035);transform-origin:left 0;">26/01/2017</div>
<div class="t" style="top:490px;font-size:11.5px;line-height:13px;color:#141414;white-space:nowrap;left:460px;transform:scaleX(1.035);transform-origin:left 0;">26/01/2017</div>
<div class="t" style="top:490px;font-size:11.5px;line-height:13px;color:#141414;white-space:nowrap;left:704px;transform:scaleX(0.913);transform-origin:left 0;">Realised Exchange Gain/Loss</div>
<div class="t" style="top:490px;font-size:11.5px;line-height:13px;color:#141414;white-space:nowrap;left:863px;transform:scaleX(0.962);transform-origin:left 0;">BA-00002</div>
<div class="t" style="top:490px;font-size:11.5px;line-height:13px;color:#141414;white-space:nowrap;right:123px;text-align:right;transform:scaleX(1.011);transform-origin:right 0;">5,360.00</div>
<div class="t" style="top:490px;font-size:11.5px;line-height:13px;color:#141414;white-space:nowrap;right:29px;text-align:right;transform:scaleX(1.011);transform-origin:right 0;">0.00</div>
<div style="left:284px;top:486px;width:856px;height:1px;background:#b4b4b4;"></div>
<div style="left:294px;top:505px;width:846px;height:18px;background:#effbef;"></div>
<div style="left:284px;top:505px;width:10px;height:18px;background:#f0f0f0;"></div>
<div class="t" style="top:508px;font-size:11.5px;line-height:13px;color:#141414;white-space:nowrap;left:294px;width:78px;text-align:center;transform:scaleX(0.851);transform-origin:center 0;">DS</div>
<div class="t" style="top:508px;font-size:11.5px;line-height:13px;color:#141414;white-space:nowrap;left:374px;transform:scaleX(1.035);transform-origin:left 0;">17/01/2017</div>
<div class="t" style="top:508px;font-size:11.5px;line-height:13px;color:#141414;white-space:nowrap;left:460px;transform:scaleX(1.035);transform-origin:left 0;">17/01/2017</div>
<div class="t" style="top:508px;font-size:11.5px;line-height:13px;color:#141414;white-space:nowrap;left:546px;transform:scaleX(0.879);transform-origin:left 0;">CELCOM (M) COMMUNICATIO...</div>
<div class="t" style="top:508px;font-size:11.5px;line-height:13px;color:#141414;white-space:nowrap;left:704px;transform:scaleX(0.858);transform-origin:left 0;">PURCHASE-PREPAID</div>
<div class="t" style="top:508px;font-size:11.5px;line-height:13px;color:#141414;white-space:nowrap;left:863px;transform:scaleX(0.973);transform-origin:left 0;">PI-00039</div>
<div class="t" style="top:508px;font-size:11.5px;line-height:13px;color:#141414;white-space:nowrap;right:123px;text-align:right;transform:scaleX(1.010);transform-origin:right 0;">35,000.00</div>
<div class="t" style="top:508px;font-size:11.5px;line-height:13px;color:#141414;white-space:nowrap;right:29px;text-align:right;transform:scaleX(1.011);transform-origin:right 0;">2,100.00</div>
<div style="left:284px;top:504px;width:856px;height:1px;background:#b4b4b4;"></div>
<div style="left:294px;top:523px;width:846px;height:18px;background:#fff;"></div>
<div style="left:284px;top:523px;width:10px;height:18px;background:#f0f0f0;"></div>
<div class="t" style="top:526px;font-size:11.5px;line-height:13px;color:#141414;white-space:nowrap;left:294px;width:78px;text-align:center;transform:scaleX(0.851);transform-origin:center 0;">OS</div>
<div class="t" style="top:526px;font-size:11.5px;line-height:13px;color:#141414;white-space:nowrap;left:374px;transform:scaleX(1.035);transform-origin:left 0;">25/01/2017</div>
<div class="t" style="top:526px;font-size:11.5px;line-height:13px;color:#141414;white-space:nowrap;left:460px;transform:scaleX(1.035);transform-origin:left 0;">25/01/2017</div>
<div class="t" style="top:526px;font-size:11.5px;line-height:13px;color:#141414;white-space:nowrap;left:863px;transform:scaleX(0.966);transform-origin:left 0;">JV-00004</div>
<div class="t" style="top:526px;font-size:11.5px;line-height:13px;color:#141414;white-space:nowrap;right:123px;text-align:right;transform:scaleX(1.010);transform-origin:right 0;">15,500.00</div>
<div class="t" style="top:526px;font-size:11.5px;line-height:13px;color:#141414;white-space:nowrap;right:29px;text-align:right;transform:scaleX(1.011);transform-origin:right 0;">0.00</div>
<div style="left:284px;top:522px;width:856px;height:1px;background:#b4b4b4;"></div>
<div style="left:294px;top:541px;width:846px;height:19px;background:#effbef;"></div>
<div style="left:284px;top:541px;width:10px;height:19px;background:#f0f0f0;"></div>
<div class="t" style="top:545px;font-size:11.5px;line-height:13px;color:#141414;white-space:nowrap;left:294px;width:78px;text-align:center;transform:scaleX(0.851);transform-origin:center 0;">TX</div>
<div class="t" style="top:545px;font-size:11.5px;line-height:13px;color:#141414;white-space:nowrap;left:374px;transform:scaleX(1.035);transform-origin:left 0;">05/01/2017</div>
<div class="t" style="top:545px;font-size:11.5px;line-height:13px;color:#141414;white-space:nowrap;left:460px;transform:scaleX(1.035);transform-origin:left 0;">05/01/2017</div>
<div class="t" style="top:545px;font-size:11.5px;line-height:13px;color:#141414;white-space:nowrap;left:546px;transform:scaleX(0.879);transform-origin:left 0;">CELCOM (M) COMMUNICATIO...</div>
<div class="t" style="top:545px;font-size:11.5px;line-height:13px;color:#141414;white-space:nowrap;left:704px;transform:scaleX(0.877);transform-origin:left 0;">UPKEEP OF MOTOR VEHICLE ...</div>
<div class="t" style="top:545px;font-size:11.5px;line-height:13px;color:#141414;white-space:nowrap;left:863px;transform:scaleX(0.973);transform-origin:left 0;">PI-00029</div>
<div class="t" style="top:545px;font-size:11.5px;line-height:13px;color:#141414;white-space:nowrap;right:123px;text-align:right;transform:scaleX(1.009);transform-origin:right 0;">150.00</div>
<div class="t" style="top:545px;font-size:11.5px;line-height:13px;color:#141414;white-space:nowrap;right:29px;text-align:right;transform:scaleX(1.011);transform-origin:right 0;">9.00</div>
<div style="left:284px;top:541px;width:856px;height:1px;background:#b4b4b4;"></div>
<div style="left:294px;top:560px;width:846px;height:18px;background:#fff;"></div>
<div style="left:284px;top:560px;width:10px;height:18px;background:#f0f0f0;"></div>
<div class="t" style="top:563px;font-size:11.5px;line-height:13px;color:#141414;white-space:nowrap;left:294px;width:78px;text-align:center;transform:scaleX(0.851);transform-origin:center 0;">TX</div>
<div class="t" style="top:563px;font-size:11.5px;line-height:13px;color:#141414;white-space:nowrap;left:374px;transform:scaleX(1.035);transform-origin:left 0;">17/01/2017</div>
<div class="t" style="top:563px;font-size:11.5px;line-height:13px;color:#141414;white-space:nowrap;left:460px;transform:scaleX(1.035);transform-origin:left 0;">17/01/2017</div>
<div class="t" style="top:563px;font-size:11.5px;line-height:13px;color:#141414;white-space:nowrap;left:546px;transform:scaleX(0.879);transform-origin:left 0;">CELCOM (M) COMMUNICATIO...</div>
<div class="t" style="top:563px;font-size:11.5px;line-height:13px;color:#141414;white-space:nowrap;left:704px;transform:scaleX(0.880);transform-origin:left 0;">LAND &amp; BUILDING</div>
<div class="t" style="top:563px;font-size:11.5px;line-height:13px;color:#141414;white-space:nowrap;left:863px;transform:scaleX(0.973);transform-origin:left 0;">PI-00039</div>
<div class="t" style="top:563px;font-size:11.5px;line-height:13px;color:#141414;white-space:nowrap;right:123px;text-align:right;transform:scaleX(1.010);transform-origin:right 0;">65,000.00</div>
<div class="t" style="top:563px;font-size:11.5px;line-height:13px;color:#141414;white-space:nowrap;right:29px;text-align:right;transform:scaleX(1.011);transform-origin:right 0;">3,900.00</div>
<div style="left:284px;top:559px;width:856px;height:1px;background:#b4b4b4;"></div>
<div style="left:293px;top:284px;width:1px;height:294px;background:#b4b4b4;"></div>
<div style="left:372px;top:284px;width:1px;height:294px;background:#b4b4b4;"></div>
<div style="left:458px;top:284px;width:1px;height:294px;background:#b4b4b4;"></div>
<div style="left:544px;top:284px;width:1px;height:294px;background:#b4b4b4;"></div>
<div style="left:702px;top:284px;width:1px;height:294px;background:#b4b4b4;"></div>
<div style="left:862px;top:284px;width:1px;height:294px;background:#b4b4b4;"></div>
<div style="left:954px;top:284px;width:1px;height:294px;background:#b4b4b4;"></div>
<div style="left:1046px;top:284px;width:1px;height:294px;background:#b4b4b4;"></div>
<svg style="position:absolute;left:286px;top:289px" width="5" height="9" viewBox="0 0 5 9"><path d="M0 0.5L5 4.5L0 8.5Z" fill="#000"/></svg>
<div style="left:284px;top:577px;width:856px;height:2px;background:#a0a0a0;"></div>
<div style="left:284px;top:579px;width:856px;height:21px;background:#f0f0f0;"></div>
<div style="left:294px;top:579px;width:1px;height:21px;background:#d8d8d8;"></div>
<div style="left:374px;top:580px;width:84px;height:18px;background:linear-gradient(#ececec,#e2e2e2);"></div>
<div class="t" style="top:583px;font-size:11.5px;line-height:13px;color:#141414;white-space:nowrap;left:375px;transform:scaleX(1.040);transform-origin:left 0;">Count = 24</div>
<div style="left:956px;top:580px;width:89px;height:18px;background:linear-gradient(#ececec,#e2e2e2);"></div>
<div style="left:1048px;top:580px;width:90px;height:18px;background:linear-gradient(#ececec,#e2e2e2);"></div>
<div class="t" style="top:583px;font-size:11.5px;line-height:13px;color:#141414;white-space:nowrap;right:31px;text-align:right;transform:scaleX(0.952);transform-origin:right 0;">Claimable: 222.60</div>
<div style="left:1140px;top:198px;width:1px;height:402px;background:#f8f8f8;"></div>
<div style="left:1141px;top:215px;width:15px;height:230px;background:#cdcdcd;"></div>
<div style="left:1139px;top:244px;width:1px;height:356px;background:#a8a8a8;"></div>
<div style="left:1156px;top:198px;width:1px;height:403px;background:#d4d4d4;"></div>
<div style="left:1157px;top:198px;width:4px;height:406px;background:#fbfbfb;"></div>
<div style="left:281px;top:600px;width:877px;height:1px;background:#d4d4d4;"></div>
<div style="left:279px;top:239px;width:869px;height:367px;border:5px solid #e8202a;"></div>
</body></html>
